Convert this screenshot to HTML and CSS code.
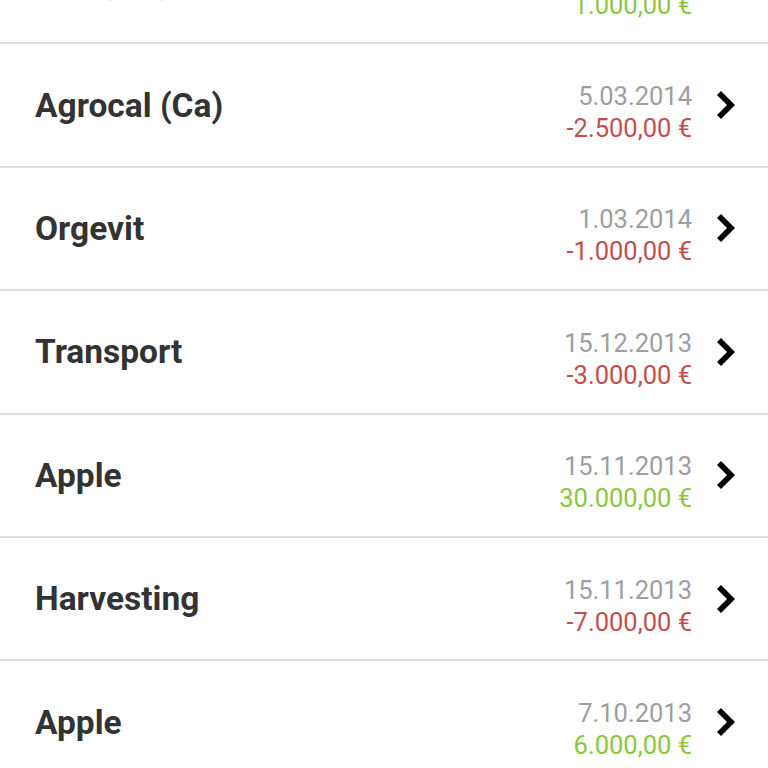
FILE: index.html
```html
<!DOCTYPE html>
<html>
<head>
<meta charset="utf-8">
<link rel="stylesheet" href="styles.css">
</head>
<body>
<ul class="list">
  <li class="row">
    <span class="title">Kali (Mg)</span>
    <div class="meta"><div class="date">20.03.2014</div><div class="amount pos">1.000,00 €</div></div>
    <svg class="chev" viewBox="0 0 18 28" width="18" height="28"><polygon points="0,4 4,0 18,14 4,28 0,24 10,14"/></svg>
  </li>
  <li class="row">
    <span class="title">Agrocal (Ca)</span>
    <div class="meta"><div class="date">5.03.2014</div><div class="amount neg">-2.500,00 €</div></div>
    <svg class="chev" viewBox="0 0 18 28" width="18" height="28"><polygon points="0,4 4,0 18,14 4,28 0,24 10,14"/></svg>
  </li>
  <li class="row">
    <span class="title">Orgevit</span>
    <div class="meta"><div class="date">1.03.2014</div><div class="amount neg">-1.000,00 €</div></div>
    <svg class="chev" viewBox="0 0 18 28" width="18" height="28"><polygon points="0,4 4,0 18,14 4,28 0,24 10,14"/></svg>
  </li>
  <li class="row">
    <span class="title">Transport</span>
    <div class="meta"><div class="date">15.12.2013</div><div class="amount neg">-3.000,00 €</div></div>
    <svg class="chev" viewBox="0 0 18 28" width="18" height="28"><polygon points="0,4 4,0 18,14 4,28 0,24 10,14"/></svg>
  </li>
  <li class="row">
    <span class="title">Apple</span>
    <div class="meta"><div class="date">15.11.2013</div><div class="amount pos">30.000,00 €</div></div>
    <svg class="chev" viewBox="0 0 18 28" width="18" height="28"><polygon points="0,4 4,0 18,14 4,28 0,24 10,14"/></svg>
  </li>
  <li class="row">
    <span class="title">Harvesting</span>
    <div class="meta"><div class="date">15.11.2013</div><div class="amount neg">-7.000,00 €</div></div>
    <svg class="chev" viewBox="0 0 18 28" width="18" height="28"><polygon points="0,4 4,0 18,14 4,28 0,24 10,14"/></svg>
  </li>
  <li class="row">
    <span class="title">Apple</span>
    <div class="meta"><div class="date">7.10.2013</div><div class="amount pos">6.000,00 €</div></div>
    <svg class="chev" viewBox="0 0 18 28" width="18" height="28"><polygon points="0,4 4,0 18,14 4,28 0,24 10,14"/></svg>
  </li>
</ul>
</body>
</html>
```
FILE: styles.css
```css
html, body {
  margin: 0;
  padding: 0;
  background: #ffffff;
  overflow: hidden;
  height: 768px;
}
body {
  font-family: Roboto, "Liberation Sans", sans-serif;
}
.list {
  list-style: none;
  margin: -79px 0 0 0;
  padding: 0;
}
.row {
  display: flex;
  align-items: center;
  box-sizing: border-box;
  height: 123.4px;
  padding: 0 33px 0 35px;
  border-bottom: 2px solid #dedede;
}
.title {
  flex: 1;
  font-size: 33.5px;
  font-weight: 700;
  color: #333333;
}
.meta {
  text-align: right;
  font-size: 25.5px;
  line-height: 32px;
  padding-top: 14px;
}
.date {
  color: #9e9e9e;
}
.amount.neg {
  color: #c24f4c;
}
.amount.pos {
  color: #8cc63f;
}
.chev {
  margin-left: 25px;
  display: block;
  fill: #000000;
}
```
